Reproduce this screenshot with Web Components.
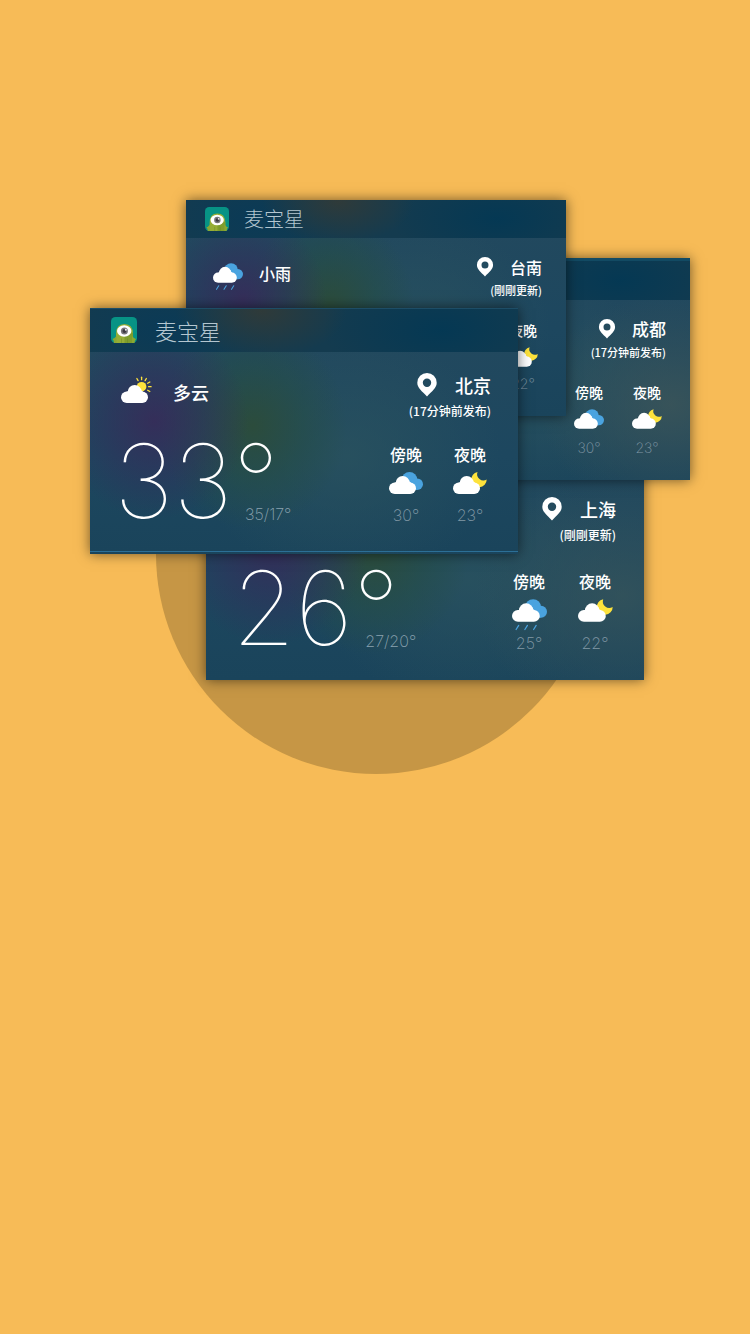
<!DOCTYPE html>
<html lang="zh">
<head>
<meta charset="utf-8">
<meta name="viewport" content="width=device-width, initial-scale=1">
<title>麦宝星</title>
<style>
  html { background: #f7bb57; }
  body { margin: 0; min-height: 100vh; font-family: "Liberation Sans", "Noto Sans CJK SC", sans-serif; color: #fff; }
</style>
</head>
<body>
<card-collage>
  <weather-card class="shanghai" size="xlarge">
    <big-temperature slot="now" value="26" range="27/20°"></big-temperature>
    <city-label slot="city" name="上海" note="(剛剛更新)"></city-label>
    <day-part slot="part" label="傍晚" sky="rain" temp="25°"></day-part>
    <day-part slot="part" label="夜晚" sky="moon" temp="22°"></day-part>
  </weather-card>
  <weather-card class="chengdu" size="small">
    <city-label slot="city" name="成都" note="(17分钟前发布)"></city-label>
    <day-part slot="part" label="傍晚" sky="cloudy" temp="30°"></day-part>
    <day-part slot="part" label="夜晚" sky="moon" temp="23°"></day-part>
  </weather-card>
  <weather-card class="tainan" size="small">
    <app-title slot="title">麦宝星</app-title>
    <sky-condition slot="condition" sky="rain">小雨</sky-condition>
    <city-label slot="city" name="台南" note="(剛剛更新)"></city-label>
    <day-part slot="part" label="夜晚" sky="moon" temp="22°"></day-part>
  </weather-card>
  <weather-card class="beijing" size="large">
    <app-title slot="title">麦宝星</app-title>
    <sky-condition slot="condition" sky="sun">多云</sky-condition>
    <big-temperature slot="now" value="33" range="35/17°"></big-temperature>
    <city-label slot="city" name="北京" note="(17分钟前发布)"></city-label>
    <day-part slot="part" label="傍晚" sky="cloudy" temp="30°"></day-part>
    <day-part slot="part" label="夜晚" sky="moon" temp="23°"></day-part>
  </weather-card>
</card-collage>

<script>
class Base extends HTMLElement {
  connectedCallback() {
    if (this.shadowRoot) return;
    this.attachShadow({ mode: 'open' }).innerHTML = this.render();
  }
  attr(name) { return this.getAttribute(name) || ''; }
}

customElements.define('card-collage', class extends Base {
  render() {
    return `<style>
      :host { display: block; position: relative; max-width: 750px; min-height: 774px; margin: 0 auto; }
      .disc { position: absolute; left: 156px; top: 334px; width: 440px; height: 440px; border-radius: 50%; background: #c69645; }
      /* the cards are a loose pile, each free on the canvas */
      ::slotted(weather-card) { position: absolute; }
      ::slotted(.beijing)  { left: 90px;  top: 308px; width: 428px; --top-line: #1d4d66; --top-size: 1px; --bottom-line: #2c6f96; }
      ::slotted(.tainan)   { left: 186px; top: 200px; width: 380px; }
      ::slotted(.chengdu)  { left: 302px; top: 258px; width: 388px; --head: 42px; --temp-gap: 10px; --top-line: #124a63; --top-size: 3px; --text: 17px; --glow: rgba(62,86,88,.8); }
      ::slotted(.shanghai) { left: 206px; top: 431px; width: 438px; --glow: rgba(54,84,90,.8); }
    </style><div class="disc"></div><slot></slot>`;
  }
});

customElements.define('weather-card', class extends Base {
  render() {
    return `<style>
      :host {
        --head: 44px; --pad: 31px; --top: 21px; --cond-top: 7px; --now-gap: 37px; --end: 27px; --part-end: 16px; --bottom: 29px;
        --title: 22px; --logo: 26px; --text: 18px; --text-lh: 24px; --note: 12px; --note-lh: 16px; --note-gap: 6px;
        --label: 16px; --label-lh: 20px; --temp: 16px; --icon: 34px; --icon-h: 22px; --icon-gap: 8px; --temp-gap: 11px;
        --part: 64px; --part-gap: 25px; --pin: 20px; --pin-gap: 18px; --cond-gap: 18px; --title-gap: 18px; --logo-pad: 21px; --head-end: 1px;
        display: block; box-sizing: border-box; position: relative;
        box-shadow: 0 0 12px rgba(0,0,0,.55);
        background:
          radial-gradient(ellipse 22% 40% at 15% 46%, rgba(60,38,88,.75), rgba(54,42,90,.45) 50%, rgba(50,50,92,0)),
          radial-gradient(ellipse 22% 42% at 38% 48%, rgba(44,76,58,.95), rgba(38,78,68,.55) 55%, rgba(34,76,80,0)),
          radial-gradient(ellipse 34% 50% at 95% 66%, var(--glow, transparent), rgba(50,84,94,0)),
          radial-gradient(ellipse 36% 50% at 60% 60%, rgba(44,84,94,.7), rgba(40,80,94,0)),
          linear-gradient(#23495e, #1d475f 60%, #1a445b);
      }
      :host([size=xlarge]) { --head: 45px; --part-gap: 28px; --icon: 35px; --icon-h: 23px; --part: 66px; --end: 28px; --bottom: 27px; --now-gap: 40px; --pad: 33px; --cond-top: 31px; }
      :host([size=small]) {
        --head: 38px; --pad: 27px; --top: 19px; --cond-top: 6px; --end: 24px; --part-end: 14px; --bottom: 23px;
        --title: 20px; --logo: 24px; --text: 16px; --text-lh: 20px; --note: 11px; --note-lh: 14px; --note-gap: 6px;
        --label: 14px; --label-lh: 18px; --temp: 14px; --icon: 30px; --icon-h: 20px; --icon-gap: 8px; --temp-gap: 8px;
        --part: 58px; --part-gap: 24px; --pin: 18px; --pin-gap: 16px; --cond-gap: 16px; --title-gap: 15px; --logo-pad: 19px; --head-end: 0;
      }
      header {
        box-sizing: border-box; height: var(--head); padding: 0 0 var(--head-end) var(--logo-pad); display: flex; align-items: center;
        border-top: var(--top-size, 0) solid var(--top-line, transparent);
        background:
          radial-gradient(ellipse 20% 110% at 40% 5%, rgba(56,58,50,.75), rgba(40,58,66,0)),
          radial-gradient(ellipse 28% 140% at 82% 50%, rgba(3,56,84,.9), rgba(5,56,80,0)),
          radial-gradient(ellipse 25% 140% at 18% 50%, rgba(8,58,88,.8), rgba(8,58,86,0)),
          #143b4f;
      }
      .body { display: flex; justify-content: space-between; padding-top: var(--top); padding-bottom: var(--bottom); }
      .left { padding-left: var(--pad); padding-top: var(--cond-top); }
      .right { display: flex; flex-direction: column; align-items: flex-end; }
      .city { padding-right: var(--end); }
      .parts { display: flex; padding-right: var(--part-end); margin-top: var(--part-gap); }
      .rule { position: absolute; left: 0; right: 0; bottom: 2px; height: 1px; background: var(--bottom-line, transparent); }
    </style>
    <header><slot name="title"></slot></header>
    <div class="body">
      <div class="left"><slot name="condition"></slot><slot name="now"></slot></div>
      <div class="right">
        <div class="city"><slot name="city"></slot></div>
        <div class="parts"><slot name="part"></slot></div>
      </div>
    </div>
    <div class="rule"></div>`;
  }
});

customElements.define('app-title', class extends Base {
  render() {
    return `<style>
      :host { display: flex; align-items: center; gap: var(--title-gap); font: 300 var(--title)/32px "Noto Sans CJK SC", sans-serif; color: #b4c6d0; }
      svg { width: var(--logo); height: var(--logo); flex: none; }
    </style>
    <svg viewBox="0 0 26 26" aria-hidden="true">
      <rect width="26" height="26" rx="4.5" fill="#079385"/>
      <path d="M5 26V17Q5 7 13.500 7T22 17V26Z" fill="#96ad35"/>
      <path d="M13.500 16H22V26H13.500Z" fill="#7f9d2c"/>
      <path d="M1.500 22Q3 22 5.500 19V26H3Q3 23.500 1.500 22ZM25 22Q23.500 22 21 19V26H23.500Q23.500 23.500 25 22Z" fill="#8aa832"/>
      <path d="M10.500 21.500V26M16.500 21.500V26" stroke="#628421" stroke-width=".4"/>
      <ellipse cx="13.200" cy="14" rx="7.200" ry="5.700" fill="#fff"/>
      <circle cx="13.400" cy="14" r="3.500" fill="#77767c"/>
      <circle cx="13.400" cy="14" r="1.900" fill="#3d3942"/>
      <circle cx="14.800" cy="12.800" r="1" fill="#eee"/>
    </svg><slot></slot>`;
  }
});

customElements.define('sky-icon', class extends Base {
  render() {
    const white = '<g fill="#fff"><rect y="10.500" width="27" height="11.500" rx="5.750"/><circle cx="13.700" cy="11" r="7"/><path d="M5.500 10.800Q7.200 11 7.500 9L20 8Q20.500 10.500 22 10.600V15H5.500Z"/></g>';
    const blue = '<g fill="#4aa3df"><circle cx="20.500" cy="7.800" r="7.800"/><circle cx="28.200" cy="12.200" r="5.800"/><path d="M16 8H28V18H16Z"/></g>';
    const drops = '<path d="M6.500 25.500L4 29.500M15 25.500L12.500 29.500M23.500 25.500L21 29.500" stroke="#4aa3df" stroke-width="1.200" stroke-linecap="round"/>';
    const moon = '<path d="M24.500 0A7.700 7.700 0 1 0 33.700 7.500A6.300 6.300 0 0 1 24.500 0Z" fill="#fde23c"/>';
    let rays = '';
    for (let a = -120; a <= 30; a += 30) rays += `<path d="M7 0H9.500" transform="translate(20.600 5.700) rotate(${a})"/>`;
    const sun = `<circle cx="20.600" cy="5.700" r="4.800" fill="#fde23c"/><g stroke="#fde23c" stroke-width="1.300" stroke-linecap="round">${rays}</g>`;
    const art = { rain: blue + white + drops, cloudy: blue + white, moon: moon + white, sun: sun + white }[this.attr('sky')];
    return `<style>
      :host { display: block; width: var(--icon); height: var(--icon-h); }
      svg { display: block; width: 100%; height: 100%; overflow: visible; }
    </style><svg viewBox="0 0 34 22" aria-hidden="true">${art}</svg>`;
  }
});

customElements.define('sky-condition', class extends Base {
  render() {
    return `<style>
      :host { display: flex; align-items: center; gap: var(--cond-gap); font: 500 var(--text)/var(--text-lh) "Noto Sans CJK SC", sans-serif; }
    </style><sky-icon sky="${this.attr('sky')}"></sky-icon><slot></slot>`;
  }
});

customElements.define('big-temperature', class extends Base {
  render() {
    return `<style>
      :host { display: flex; align-items: flex-end; margin: var(--now-gap) 0 0 -7px; font-family: Inter, "Liberation Sans", sans-serif; }
      .now { font-weight: 100; font-size: 102px; line-height: 80px; }
      .range { font-weight: 200; font-size: 16px; line-height: 20px; color: #8ba3b0; margin: 0 0 -3px -34px; }
    </style><span class="now">${this.attr('value')}°</span><span class="range">${this.attr('range')}</span>`;
  }
});

customElements.define('city-label', class extends Base {
  render() {
    return `<style>
      :host { display: flex; flex-direction: column; align-items: flex-end; gap: var(--note-gap); }
      .name { display: flex; align-items: center; gap: var(--pin-gap); font: 500 var(--text)/var(--text-lh) "Noto Sans CJK SC", sans-serif; }
      .note { font: 500 var(--note)/var(--note-lh) "Noto Sans CJK SC", sans-serif; white-space: nowrap; }
      svg { width: var(--pin); height: var(--text-lh); }
    </style>
    <span class="name"><svg viewBox="0 0 20 24" aria-hidden="true"><path fill="#fff" fill-rule="evenodd" d="M10 0A9.700 9.700 0 0 1 19.700 9.700C19.700 15 15 18 10 23.500C5 18 .3 15 .3 9.700A9.700 9.700 0 0 1 10 0ZM10 5.500A4.200 4.200 0 1 0 10 13.900A4.200 4.200 0 0 0 10 5.500Z"/></svg>${this.attr('name')}</span>
    <span class="note">${this.attr('note')}</span>`;
  }
});

customElements.define('day-part', class extends Base {
  render() {
    return `<style>
      :host { display: flex; flex-direction: column; align-items: center; width: var(--part); }
      .label { font: 500 var(--label)/var(--label-lh) "Noto Sans CJK SC", sans-serif; }
      sky-icon { margin: var(--icon-gap) 0 var(--temp-gap); }
      .temp { font: 200 var(--temp)/var(--label-lh) Inter, sans-serif; color: #8299a6; }
    </style>
    <span class="label">${this.attr('label')}</span>
    <sky-icon sky="${this.attr('sky')}"></sky-icon>
    <span class="temp">${this.attr('temp')}</span>`;
  }
});
</script>
</body>
</html>
